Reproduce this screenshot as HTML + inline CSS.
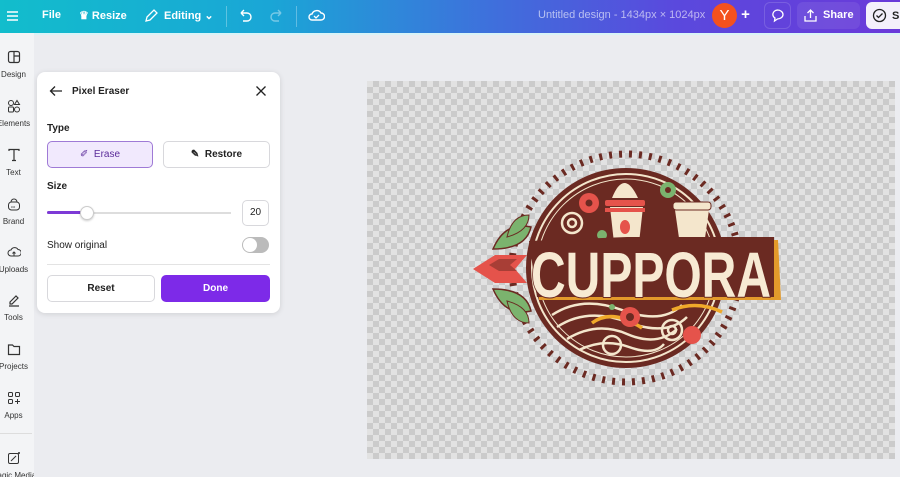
<!DOCTYPE html>
<html><head><meta charset="utf-8"><style>
*{margin:0;padding:0;box-sizing:border-box}
body{width:900px;height:477px;overflow:hidden;background:#ebecf0;font-family:"Liberation Sans",sans-serif;position:relative}
.top{position:absolute;left:0;top:0;width:900px;height:33px;background:linear-gradient(90deg,#12bdcc 0%,#1aa6d6 30%,#3f6fdc 55%,#5a49dd 75%,#6a3ad9 100%);color:#fff;font-size:11px;font-weight:bold}
.top span{position:absolute;top:9px}
.side{position:absolute;left:0;top:33px;width:34px;height:444px;background:#f3f4f6;font-size:8px;color:#333;overflow:hidden}
.side .it{position:absolute;left:0;width:27px;display:flex;flex-direction:column;align-items:center;white-space:nowrap}
.side svg{display:block;margin:0 0 6px}
.panel{position:absolute;left:37px;top:72px;width:243px;height:241px;background:#fff;border-radius:8px;box-shadow:0 1px 6px rgba(0,0,0,.12);font-size:10px;color:#222}
.panel .ab{position:absolute}
.btn{position:absolute;border:1px solid #d8d8dc;border-radius:5px;text-align:center;font-size:10px;font-weight:bold}
.check{position:absolute;left:367px;top:81px;width:528px;height:378px;background-color:#e2e2e2;background-image:linear-gradient(45deg,#cbcbcb 25%,transparent 25%,transparent 75%,#cbcbcb 75%),linear-gradient(45deg,#cbcbcb 25%,transparent 25%,transparent 75%,#cbcbcb 75%);background-size:12px 12px;background-position:0 0,6px 6px}
</style></head><body>
<div class="top">
<svg style="position:absolute;left:6px;top:10px" width="13" height="12"><path d="M1 2h11M1 6h11M1 10h11" stroke="#fff" stroke-width="1.5"/></svg>
<span style="left:42px">File</span>
<span style="left:79px">♛ Resize</span>
<svg style="position:absolute;left:144px;top:9px" width="14" height="14"><path d="M2 12l1-4 7-7 3 3-7 7z" fill="none" stroke="#fff" stroke-width="1.3"/></svg>
<span style="left:164px">Editing ⌄</span>
<div style="position:absolute;left:226px;top:6px;width:1px;height:21px;background:rgba(255,255,255,.3)"></div>
<svg style="position:absolute;left:238px;top:9px" width="14" height="14"><path d="M3 4h6a4 4 0 010 8H5M3 4l3-3M3 4l3 3" fill="none" stroke="#fff" stroke-width="1.4"/></svg>
<svg style="position:absolute;left:270px;top:9px;opacity:.4" width="14" height="14"><path d="M11 4H5a4 4 0 000 8h4M11 4L8 1M11 4L8 7" fill="none" stroke="#fff" stroke-width="1.4"/></svg>
<div style="position:absolute;left:296px;top:6px;width:1px;height:21px;background:rgba(255,255,255,.3)"></div>
<svg style="position:absolute;left:308px;top:8px" width="17" height="15"><path d="M4 12a3 3 0 010-6 5 5 0 019-1 3.5 3.5 0 010 7z" fill="none" stroke="#fff" stroke-width="1.4"/><path d="M6 8l2 2 3-3" fill="none" stroke="#fff" stroke-width="1.3"/></svg>
<span style="left:538px;font-weight:normal;color:rgba(255,255,255,.6)">Untitled design - 1434px × 1024px</span>
<div style="position:absolute;left:712px;top:3px;width:25px;height:25px;border-radius:50%;background:#f4511e;text-align:center;line-height:25px;font-size:15px;font-weight:normal">Y</div>
<div style="position:absolute;left:733px;top:3px;width:25px;height:25px;border-radius:50%;text-align:center;line-height:24px;font-size:15px">+</div>
<div style="position:absolute;left:764px;top:2px;width:27px;height:27px;border-radius:6px;border:1px solid rgba(255,255,255,.15)"></div>
<svg style="position:absolute;left:770px;top:8px" width="15" height="15"><path d="M7.5 2a5.5 4.5 0 110 9l-3 2 .5-3A5.5 4.5 0 017.5 2z" fill="none" stroke="#fff" stroke-width="1.3"/></svg>
<div style="position:absolute;left:797px;top:2px;width:63px;height:27px;border-radius:6px;background:rgba(255,255,255,.08)"></div>
<svg style="position:absolute;left:803px;top:8px" width="15" height="15"><path d="M2 8v5h11V8M7.5 10V2M4.5 5l3-3 3 3" fill="none" stroke="#fff" stroke-width="1.3"/></svg>
<span style="left:823px">Share</span>
<div style="position:absolute;left:866px;top:2px;width:40px;height:27px;border-radius:6px;background:#f4f0fb;color:#222"><svg style="position:absolute;left:6px;top:6px" width="15" height="15"><circle cx="7.5" cy="7.5" r="6" fill="none" stroke="#222" stroke-width="1.3"/><path d="M4.5 7.5l2 2 4-4" fill="none" stroke="#222" stroke-width="1.3"/></svg><span style="left:26px;top:8px">S</span></div>
</div>
<div style="position:absolute;left:0;top:33px;width:900px;height:2px;background:#d9f3f7"></div>

<div class="side">
<div class="it" style="top:17px"><svg width="14" height="14"><rect x="1.5" y="1.5" width="11" height="11" rx="2" fill="none" stroke="#333" stroke-width="1.2"/><path d="M7 1.5v11M7 6h5.5" stroke="#333" stroke-width="1.2"/></svg>Design</div>
<div class="it" style="top:66px"><svg width="14" height="14"><circle cx="4" cy="4" r="2.5" fill="none" stroke="#333"/><path d="M10 1.5l2.5 4h-5z" fill="none" stroke="#333"/><rect x="1.5" y="8" width="5" height="5" rx="1" fill="none" stroke="#333"/><circle cx="10" cy="10.5" r="2.5" fill="none" stroke="#333"/></svg>Elements</div>
<div class="it" style="top:115px"><svg width="14" height="14"><path d="M2 3V1.5h10V3M7 1.5v11M5 12.5h4" fill="none" stroke="#333" stroke-width="1.2"/></svg>Text</div>
<div class="it" style="top:164px"><svg width="14" height="14"><rect x="1.5" y="5" width="11" height="8" rx="3" fill="none" stroke="#333"/><path d="M4 5a3 3 0 016 0" fill="none" stroke="#333"/><text x="4" y="11" font-size="4" fill="#333">co</text></svg>Brand</div>
<div class="it" style="top:212px"><svg width="14" height="14"><path d="M4 11a3 3 0 010-6 4 4 0 017-.5 3 3 0 010 6.5z" fill="none" stroke="#333"/><path d="M7 11V7M5.5 8.5L7 7l1.5 1.5" fill="none" stroke="#333"/></svg>Uploads</div>
<div class="it" style="top:260px"><svg width="14" height="14"><path d="M3 9l6-6 2 2-6 6H3zM2 13h10" fill="none" stroke="#333" stroke-width="1.2"/></svg>Tools</div>
<div class="it" style="top:309px"><svg width="14" height="14"><path d="M1.5 3h4l1.5 1.5h5.5v8h-11z" fill="none" stroke="#333" stroke-width="1.2"/></svg>Projects</div>
<div class="it" style="top:358px"><svg width="14" height="14"><rect x="1.5" y="1.5" width="4" height="4" rx="1" fill="none" stroke="#333"/><rect x="8.5" y="1.5" width="4" height="4" rx="1" fill="none" stroke="#333"/><rect x="1.5" y="8.5" width="4" height="4" rx="1" fill="none" stroke="#333"/><path d="M10.5 8v5M8 10.5h5" stroke="#333"/></svg>Apps</div>
<div style="position:absolute;left:0;top:400px;width:32px;height:1px;background:#ddd"></div>
<div class="it" style="top:418px"><svg width="14" height="14"><rect x="1.5" y="2.5" width="10" height="10" rx="1.5" fill="none" stroke="#333"/><path d="M4 10l5-5" stroke="#333"/><circle cx="12" cy="2" r="1" fill="#333"/></svg>Magic Media</div>
</div>

<div class="check"></div>
<svg style="position:absolute;left:467px;top:145px" width="320" height="250" viewBox="0 0 320 250">
<circle cx="159" cy="123" r="114" fill="none" stroke="#6b2a22" stroke-width="7" stroke-dasharray="3 7"/>
<circle cx="159" cy="123" r="100" fill="#6b2a22"/>
<circle cx="159" cy="123" r="94" fill="none" stroke="#f4e6cc" stroke-width="2"/>
<circle cx="159" cy="123" r="89" fill="#6b2a22" stroke="#f4e6cc" stroke-width="1"/>
<g fill="none" stroke="#f4e6cc" stroke-width="2.5">
<path d="M85 170q30-20 70-5t60-5"/><path d="M90 182q30-20 70-5t60-5"/><path d="M100 194q30-18 60-5t50-5"/><path d="M112 205q25-12 50-3t35-3"/>
<circle cx="105" cy="78" r="10"/><circle cx="105" cy="78" r="4"/><circle cx="145" cy="200" r="9"/><circle cx="205" cy="185" r="10"/><circle cx="205" cy="185" r="4"/>
</g>
<path d="M125 178q20-15 50 5" fill="none" stroke="#f0a92a" stroke-width="3.5"/>
<path d="M205 165q25-10 50 2" fill="none" stroke="#f0a92a" stroke-width="3.5"/>
<circle cx="122" cy="58" r="10" fill="#e5534b"/><circle cx="122" cy="58" r="3.5" fill="#6b2a22"/>
<circle cx="201" cy="45" r="8" fill="#7bb36e"/><circle cx="201" cy="45" r="3" fill="#6b2a22"/>
<circle cx="163" cy="172" r="10" fill="#e5534b"/><circle cx="163" cy="172" r="4" fill="#6b2a22"/><circle cx="225" cy="190" r="9" fill="#e5534b"/>
<circle cx="135" cy="90" r="5" fill="#7bb36e"/><circle cx="145" cy="162" r="3" fill="#7bb36e"/>
<path d="M143 62h33l-4 36h-25z" fill="#f4e6cc"/><rect x="138" y="55" width="40" height="6" rx="2" fill="#e5534b"/><rect x="138" y="63" width="40" height="4" fill="#e5534b"/>
<path d="M145 53q12-30 26 0z" fill="#f4e6cc"/><ellipse cx="158" cy="82" rx="5" ry="7" fill="#e5534b"/>
<path d="M208 65h34l-5 35h-24z" fill="#f4e6cc"/><rect x="206" y="57" width="38" height="8" rx="3" fill="#f4e6cc" stroke="#6b2a22"/>
<path d="M66 99L160 95h151l3 60H72z" fill="#e39a2b"/>
<path d="M62 96L160 92h147v60H70z" fill="#6b2a22"/>
<text x="64" y="152" font-family="Liberation Sans,sans-serif" font-weight="bold" font-size="64" fill="#f7ead3" stroke="#6b2a22" stroke-width="2" paint-order="stroke" textLength="240" lengthAdjust="spacingAndGlyphs">CUPPORA</text>
<path d="M6 124l22-14h32l-12 14 12 14H28z" fill="#e5534b"/>
<path d="M22 120l10-6h18l-7 6 7 6H32z" fill="#6b2a22" opacity=".5"/>
<path d="M26 104q12-28 38-22-5 22-38 22z" fill="#7bb36e" stroke="#6b2a22" stroke-width="1.5"/>
<path d="M26 144q12 28 38 22-5-22-38-22z" fill="#7bb36e" stroke="#6b2a22" stroke-width="1.5"/>
<path d="M40 92q5-22 22-22 0 16-22 22z" fill="#7bb36e" stroke="#6b2a22"/>
<path d="M40 156q5 22 22 22 0-16-22-22z" fill="#7bb36e" stroke="#6b2a22"/>
</svg>

<div class="panel">
<svg class="ab" style="left:12px;top:13px" width="14" height="12"><path d="M13 6H2M6 1.5L1.5 6 6 10.5" fill="none" stroke="#222" stroke-width="1.3"/></svg>
<div class="ab" style="left:35px;top:14px;font-weight:bold">Pixel Eraser</div>
<svg class="ab" style="left:218px;top:13px" width="12" height="12"><path d="M1.5 1.5l9 9M10.5 1.5l-9 9" stroke="#222" stroke-width="1.3"/></svg>
<div class="ab" style="left:10px;top:51px;font-weight:bold">Type</div>
<div class="btn" style="left:10px;top:69px;width:106px;height:27px;background:#f1e9fd;border-color:#9f7ad6;line-height:25px;color:#5b2c9a;font-weight:normal">✐ &nbsp;Erase</div>
<div class="btn" style="left:126px;top:69px;width:107px;height:27px;line-height:25px">✎ &nbsp;Restore</div>
<div class="ab" style="left:10px;top:109px;font-weight:bold">Size</div>
<div class="ab" style="left:10px;top:140px;width:184px;height:2px;background:#ddd"></div>
<div class="ab" style="left:10px;top:139px;width:40px;height:3px;background:#7d3ad6;border-radius:2px"></div>
<div class="ab" style="left:43px;top:134px;width:14px;height:14px;border-radius:50%;background:#fff;border:1px solid #ccc;box-shadow:0 1px 2px rgba(0,0,0,.2)"></div>
<div class="btn" style="left:205px;top:128px;width:27px;height:26px;line-height:24px;font-weight:normal">20</div>
<div class="ab" style="left:10px;top:168px">Show original</div>
<div class="ab" style="left:205px;top:165px;width:27px;height:16px;border-radius:8px;background:#bbb"><div style="position:absolute;left:1px;top:1px;width:14px;height:14px;border-radius:50%;background:#fff"></div></div>
<div class="ab" style="left:10px;top:192px;width:223px;height:1px;background:#e3e3e3"></div>
<div class="btn" style="left:10px;top:203px;width:108px;height:27px;line-height:25px">Reset</div>
<div class="btn" style="left:124px;top:203px;width:109px;height:27px;line-height:25px;background:#7d2ae8;border-color:#7d2ae8;color:#fff">Done</div>
</div>
</body></html>
